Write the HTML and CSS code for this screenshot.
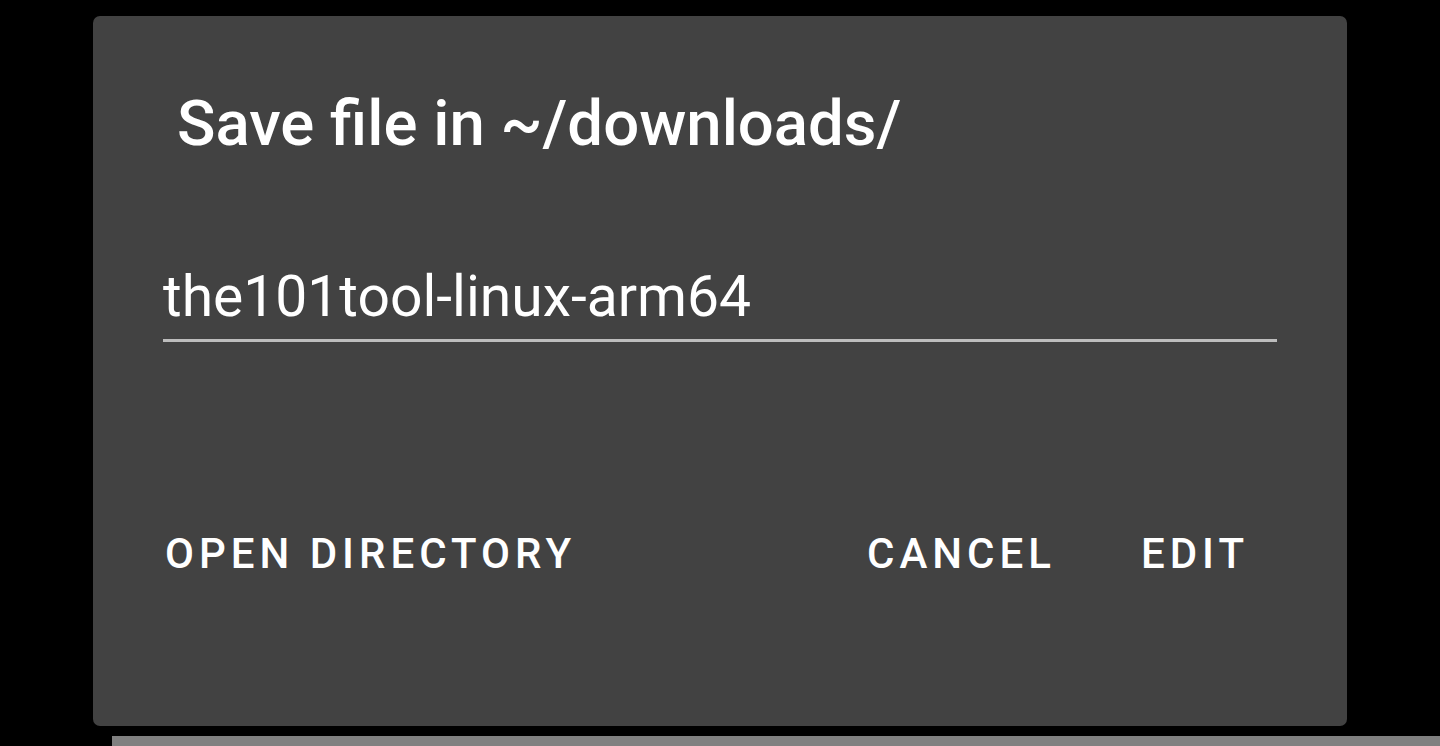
FILE: index.html
```html
<!DOCTYPE html>
<html>
<head>
<meta charset="utf-8">
<link rel="stylesheet" href="styles.css">
</head>
<body>
<div class="page">
  <div class="dialog">
    <h1 class="title">Save file in ~/downloads/</h1>
    <div class="field">the101tool-linux-arm64</div>
    <div class="actions">
      <span class="btn">OPEN DIRECTORY</span>
      <span class="spacer"></span>
      <span class="btn">CANCEL</span>
      <span class="btn">EDIT</span>
    </div>
  </div>
  <div class="bar"></div>
</div>
</body>
</html>
```
FILE: styles.css
```css
html, body {
  margin: 0;
  padding: 0;
  background: #000;
  height: 100%;
  overflow: hidden;
}
.page {
  display: flex;
  flex-direction: column;
  padding-top: 16px;
}
.dialog {
  margin-left: 93px;
  width: 1254px;
  height: 710px;
  box-sizing: border-box;
  background: #424242;
  border-radius: 7px;
  font-family: Roboto, "Liberation Sans", sans-serif;
  color: #fff;
  display: flex;
  flex-direction: column;
  padding: 68px 70px 0 70px;
}
.title {
  margin: 0 0 0 14px;
  font-size: 63.5px;
  line-height: 80px;
  font-weight: 500;
}
.field {
  margin-top: 98px;
  font-size: 57px;
  line-height: 70px;
  font-weight: 400;
  padding-bottom: 7px;
  border-bottom: 3px solid #bdbdbd;
}
.actions {
  margin-top: 187px;
  display: flex;
  align-items: baseline;
  font-size: 42px;
  line-height: 50px;
  font-weight: 500;
  letter-spacing: 5px;
  padding-right: 28px;
}
.btn {
  margin-left: 2px;
}
.spacer {
  flex: 1;
}
.btn + .btn {
  margin-left: 85px;
}
.bar {
  margin-top: 10px;
  margin-left: 112px;
  height: 10px;
  background: #808080;
}
```
